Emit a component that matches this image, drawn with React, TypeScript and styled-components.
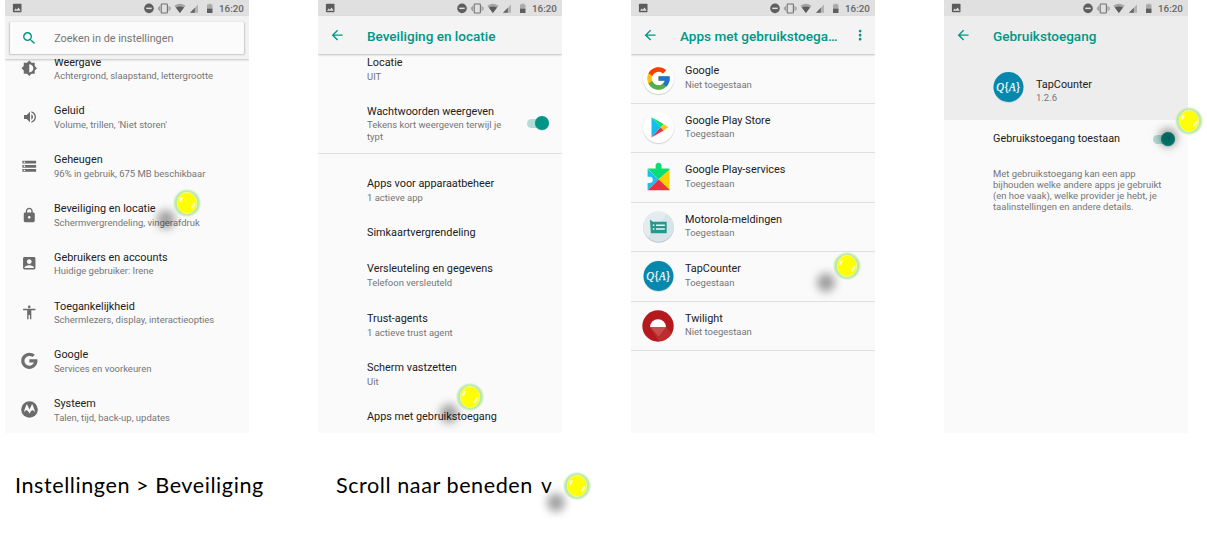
import React from "react";
import styled, { createGlobalStyle } from "styled-components";
import {
  MdSearch,
  MdArrowBack,
  MdMoreVert,
  MdBrightness6,
  MdVolumeUp,
  MdStorage,
  MdLock,
  MdAccountBox,
  MdAccessibility,
} from "react-icons/md";
import { FcGoogle } from "react-icons/fc";

const TEAL = "#009688";

const GlobalStyle = createGlobalStyle`
  body { margin: 0; background: #fff; overflow: hidden; }
  * { box-sizing: border-box; }
`;

const Page = styled.main`
  position: relative;
  width: 1207px;
  height: 537px;
  overflow: hidden;
  font-family: Roboto, "Liberation Sans", sans-serif;
`;

const Phones = styled.div`
  display: flex;
  gap: 69px;
  padding-left: 5px;
`;

const Phone = styled.section`
  display: flex;
  flex-direction: column;
  width: 244px;
  height: 433px;
  background: #fafafa;
  overflow: hidden;
`;

const StatusBar = styled.div`
  flex: none;
  display: flex;
  align-items: center;
  justify-content: space-between;
  height: 16px;
  padding: 0 5px 0 7px;
  background: #e0e0e0;
  color: #646464;
`;

const StatusRight = styled.div`
  display: flex;
  align-items: center;
`;

const Clock = styled.span`
  width: 25px;
  padding-top: 1px;
  font-size: 9.8px;
  line-height: 15px;
  font-weight: 500;
  color: #666;
  white-space: nowrap;
`;

const SearchHeader = styled.div`
  flex: none;
  position: relative;
  z-index: 1;
  height: 43px;
  padding: 6px 5px;
  background: #f2f2f2;
  box-shadow: 0 1px 2px rgba(0, 0, 0, 0.22);
`;

const SearchBox = styled.div`
  display: flex;
  align-items: center;
  height: 32px;
  padding-left: 11px;
  border-radius: 1px;
  background: #fbfbfb;
  box-shadow: 0 0.5px 1.5px 0.5px rgba(0, 0, 0, 0.18);
  color: #757575;
  font-size: 10.85px;
  svg { color: ${TEAL}; margin-right: 16.7px; }
`;

const Header = styled.header<{ $flat?: boolean }>`
  flex: none;
  position: relative;
  z-index: 1;
  display: flex;
  align-items: center;
  height: 38px;
  padding: 1px 7px 0 11px;
  color: ${TEAL};
  background: ${(p) => (p.$flat ? "#ededed" : "#f4f4f4")};
  box-shadow: ${(p) => (p.$flat ? "none" : "0 1px 2px rgba(0,0,0,0.24)")};
`;

const HeaderTitle = styled.h1`
  flex: 1;
  margin: 0 0 0 21.7px;
  font-size: 13.55px;
  line-height: 20px;
  font-weight: 500;
  white-space: nowrap;
`;

const List = styled.div<{ $lift?: number }>`
  margin-top: ${(p) => -(p.$lift ?? 0)}px;
`;

const Row = styled.div<{ $h: number; $line?: boolean; $drop?: number }>`
  display: flex;
  align-items: center;
  height: ${(p) => p.$h}px;
  padding-top: ${(p) => p.$drop ?? 0}px;
  border-bottom: ${(p) => (p.$line ? "1px solid #e0e0e0" : "none")};
`;

const IconCell = styled.div<{ $w?: number }>`
  flex: none;
  display: flex;
  align-items: center;
  justify-content: center;
  width: ${(p) => p.$w ?? 49}px;
  color: #6b6b6b;
`;

const Texts = styled.div<{ $w?: number; $rise?: number }>`
  width: ${(p) => (p.$w ? `${p.$w}px` : "auto")};
  padding-bottom: ${(p) => p.$rise ?? 0}px;
`;

const Title = styled.div`
  font-size: 10.85px;
  line-height: 14.6px;
  color: #212121;
  white-space: nowrap;
`;

const Sub = styled.div`
  font-size: 9.47px;
  line-height: 11.1px;
  color: #757575;
`;

const Gap = styled.div`
  height: 12px;
`;

const Switch = styled.div`
  display: flex;
  align-items: center;
  width: 22px;
  height: 14px;
  margin-left: auto;
  margin-right: 13px;
  &::before {
    content: "";
    flex: none;
    width: 20px;
    height: 9px;
    border-radius: 5px;
    background: #b3dcd7;
  }
  &::after {
    content: "";
    flex: none;
    width: 14px;
    height: 14px;
    margin-left: -12px;
    border-radius: 50%;
    background: ${TEAL};
    box-shadow: 0 0.5px 1px rgba(0, 0, 0, 0.2);
  }
`;

const Disc = styled.div<{ $bg: string }>`
  display: flex;
  align-items: center;
  justify-content: center;
  width: 31px;
  height: 31px;
  border-radius: 50%;
  background: ${(p) => p.$bg};
  box-shadow: 0 0.7px 1.2px rgba(0, 0, 0, 0.22);
`;

const AppHead = styled.div`
  display: flex;
  align-items: center;
  height: 66px;
  padding: 0 0 1px 49px;
  background: #ededed;
`;

const AppTexts = styled.div`
  margin: 8px 0 0 12px;
`;

const Explanation = styled.p`
  margin: 11px 10px 0 49px;
  font-size: 9.47px;
  line-height: 11.1px;
  color: #757575;
  white-space: nowrap;
`;

const Captions = styled.div`
  display: flex;
  padding: 37px 0 0 15px;
  font-family: Lato, "Open Sans", sans-serif;
  font-size: 21.6px;
  line-height: 30px;
  color: #000;
  white-space: pre;
`;

const Caption = styled.div<{ $w: number; $ls: number }>`
  width: ${(p) => p.$w}px;
  letter-spacing: ${(p) => p.$ls}px;
`;

const Chevron = styled.span`
  margin-left: 2px;
  font-size: 21px;
`;

/* Glossy marker lying over the screens, with its cast shade down-left. */
const Marker = styled.div<{ $x: number; $y: number }>`
  position: absolute;
  left: ${(p) => p.$x}px;
  top: ${(p) => p.$y}px;
  width: 0;
  height: 0;
`;

const Shade = styled.div`
  position: absolute;
  left: -30px;
  top: 7px;
  width: 18px;
  height: 19px;
  border-radius: 50%;
  background: rgba(0, 0, 0, 0.36);
  filter: blur(4.5px);
`;

const Orb = styled.svg`
  position: absolute;
  left: -15px;
  top: -15px;
`;

function PhoneStatus() {
  return (
    <StatusBar>
      <svg width="10" height="10" viewBox="0 0 10 10">
        <path d="M1.7.8h7q.8 0 .8.8v6.8q0 .8-.8.8h-7q-.8 0-.8-.8V1.6q0-.8.8-.8z" fill="#5b5b5b" />
        <path d="M2 7.7l1.7-2.3 1.2 1.4 1.6-2.2 2.2 3.1z" fill="#e0e0e0" />
      </svg>
      <StatusRight>
        <svg width="76" height="16" viewBox="0 0 76 16">
          <circle cx="6" cy="8.4" r="4.8" fill="#5e5e5e" />
          <rect x="3.3" y="7.6" width="5.4" height="1.5" fill="#e0e0e0" />
          <rect x="18.2" y="4" width="6.2" height="9" rx=".8" fill="none" stroke="#707070" strokeWidth="1.1" />
          <path d="M16.6 6v5M15.4 7.2v2.6M26 6v5M27.2 7.2v2.6" stroke="#8a8a8a" strokeWidth=".8" />
          <path d="M31.3 5.7Q36.9 2 42.5 5.7L36.9 13z" fill="#a5a5a5" />
          <path d="M32.8 7.6Q36.9 5.3 41 7.6L36.9 13z" fill="#5b5b5b" />
          <path d="M47 12.8l8-8.3v8.3z" fill="#b2b2b2" />
          <path d="M47 12.8l4.8-5v5z" fill="#666" />
          <path d="M64 4.600h1.500v-.9h2.500v.9h1.500v4h-5.500z" fill="#aaa" />
          <rect x="64" y="8.500" width="5.500" height="4.500" fill="#5e5e5e" />
        </svg>
        <Clock>16:20</Clock>
      </StatusRight>
    </StatusBar>
  );
}

function TapCounterIcon() {
  return (
    <svg width="31" height="32" viewBox="0 0 31 32">
      <circle cx="15.5" cy="16.8" r="15" fill="#c8d0d3" />
      <circle cx="15.5" cy="16" r="15" fill="#0688ae" />
      <text x="15.5" y="20.2" textAnchor="middle" textLength="24.5" lengthAdjust="spacingAndGlyphs" fontFamily="Liberation Serif, serif" fontSize="12.5" fill="#fff" stroke="#fff" strokeWidth=".25">
        <tspan fontStyle="italic">Q</tspan>
        <tspan>{"{"}</tspan>
        <tspan fontStyle="italic">A</tspan>
        <tspan>{"}"}</tspan>
      </text>
    </svg>
  );
}

function PlayStoreIcon() {
  return (
    <svg width="31" height="31" viewBox="0 0 31 31">
      <path d="M8.5 5.2L17.6 15.2 8.5 25.4z" fill="#12bdf2" />
      <path d="M8.5 5.2l12.1 6.9-3 3.1z" fill="#00e27b" />
      <path d="M8.5 25.4l12.1-6.9-3-3.3z" fill="#e8324a" />
      <path d="M20.5 12l5 3.2-5 3.3-3-3.3z" fill="#ffc515" />
    </svg>
  );
}

function PlayServicesIcon() {
  return (
    <svg width="31" height="31" viewBox="0 0 31 31">
      <path d="M15.5 17.2L26.5 7v20.2q0 1-1 1z" fill="#ffd000" />
      <path d="M15.5 17.2L4.6 28.3h20.9q1 0 1-.6z" fill="#ee2f42" />
      <path d="M4.6 6.8l10.9 10.4L4.6 28.3V21a3.2 3.2 0 1 0 0-6.2z" fill="#17c1ee" />
      <path d="M4.6 6.6h8.1V5a3.1 3.1 0 1 1 5.8 0v1.6h7q1 0 1 .8l-11 9.8z" fill="#09dd73" />
      <circle cx="6.8" cy="17.8" r="3" fill="#fafafa" />
    </svg>
  );
}

function MessageIcon() {
  return (
    <svg width="31" height="32" viewBox="0 0 31 32">
      <circle cx="15.5" cy="16.5" r="15.3" fill="#bcc6cb" />
      <circle cx="15.5" cy="15.6" r="15.2" fill="#d9e4ea" />
      <path d="M4.7 26.3A15.2 15.2 0 0 1 24 3z" fill="#e4ecf0" />
      <path d="M6.9 8.500l3 2.300h13.800v11.500H7.800z" fill="#26998e" />
      <path d="M9.800 14.200h1.600M9.800 17.900h1.600M13 14.200h8.800M13 17.900h8.800" stroke="#e7f8f5" strokeWidth="1.500" />
    </svg>
  );
}

function TwilightIcon() {
  return (
    <svg width="32" height="32" viewBox="0 0 32 32">
      <circle cx="16" cy="16" r="15.7" fill="#b3191d" />
      <path d="M8 17h16.200l5.500 6.500Q25 31 16.700 31z" fill="#bd2c2f" />
      <path d="M8 17h16.200l-7.500 9.300z" fill="#cb4c4e" />
      <path d="M8 17a8 7.8 0 0 1 16 0z" fill="#fff" />
    </svg>
  );
}

function GoogleMono() {
  return (
    <svg width="19.500" height="19.500" viewBox="0 0 48 48" fill="#6f6f6f">
      <path d="M42.600 20H23v8h11.300c-1.600 4.700-6.100 8-11.300 8-6.600 0-12-5.400-12-12s5.400-12 12-12c3.100 0 5.800 1.200 8 3l5.600-5.600C33 6 28.300 4 23 4 12 4 3 13 3 24s9 20 20 20 20-9 20-20c0-1.300-.1-2.700-.4-4z" />
    </svg>
  );
}

function MotorolaMono() {
  return (
    <svg width="17" height="17" viewBox="0 0 17 17">
      <circle cx="8.500" cy="8.500" r="8.300" fill="#6b6b6b" />
      <path d="M2.700 12.500C3.500 8 5 4.500 5.900 3L8.500 8.400 11.100 3c.9 1.500 2.400 5 3.200 9.500-.7-2.200-1.700-3.200-2.700-3.200-1.400 0-2 1.300-3.100 3.200-1.100-1.900-1.700-3.200-3.100-3.200-1 0-2 1-2.700 3.200z" fill="#fafafa" />
    </svg>
  );
}

const settings = [
  { icon: <MdBrightness6 size={16.5} />, title: "Weergave", sub: "Achtergrond, slaapstand, lettergrootte" },
  { icon: <MdVolumeUp size={16} />, title: "Geluid", sub: "Volume, trillen, 'Niet storen'" },
  { icon: <MdStorage size={16.5} />, title: "Geheugen", sub: "96% in gebruik, 675 MB beschikbaar" },
  { icon: <MdLock size={16.5} />, title: "Beveiliging en locatie", sub: "Schermvergrendeling, vingerafdruk" },
  { icon: <MdAccountBox size={16.5} />, title: "Gebruikers en accounts", sub: "Huidige gebruiker: Irene" },
  { icon: <MdAccessibility size={16.5} />, title: "Toegankelijkheid", sub: "Schermlezers, display, interactieopties" },
  { icon: <GoogleMono />, title: "Google", sub: "Services en voorkeuren" },
  { icon: <MotorolaMono />, title: "Systeem", sub: "Talen, tijd, back-up, updates" },
];

const security = [
  { h: 49.5, title: "Apps voor apparaatbeheer", sub: "1 actieve app" },
  { h: 35.5, drop: 1.5, title: "Simkaartvergrendeling" },
  { h: 49.5, title: "Versleuteling en gegevens", sub: "Telefoon versleuteld" },
  { h: 49.5, title: "Trust-agents", sub: "1 actieve trust agent" },
  { h: 49.5, title: "Scherm vastzetten", sub: "Uit" },
  { h: 35.5, drop: 1.5, title: "Apps met gebruikstoegang" },
];

const apps = [
  { icon: <Disc $bg="#fff"><FcGoogle size={27} /></Disc>, title: "Google", sub: "Niet toegestaan" },
  { icon: <Disc $bg="#fff"><PlayStoreIcon /></Disc>, title: "Google Play Store", sub: "Toegestaan" },
  { icon: <PlayServicesIcon />, title: "Google Play-services", sub: "Toegestaan" },
  { icon: <MessageIcon />, title: "Motorola-meldingen", sub: "Toegestaan" },
  { icon: <TapCounterIcon />, title: "TapCounter", sub: "Toegestaan" },
  { icon: <TwilightIcon />, title: "Twilight", sub: "Niet toegestaan" },
];

const markers = [
  [187, 203],
  [470, 397],
  [847, 266],
  [1188.5, 120.5],
  [577, 485.5],
];

export default function App() {
  return (
    <Page>
      <GlobalStyle />
      <Phones>
        <Phone>
          <PhoneStatus />
          <SearchHeader>
            <SearchBox>
              <MdSearch size={16.5} />
              Zoeken in de instellingen
            </SearchBox>
          </SearchHeader>
          <List $lift={15}>
            {settings.map((s) => (
              <Row key={s.title} $h={48.8}>
                <IconCell>{s.icon}</IconCell>
                <Texts>
                  <Title>{s.title}</Title>
                  <Sub>{s.sub}</Sub>
                </Texts>
              </Row>
            ))}
          </List>
        </Phone>

        <Phone>
          <PhoneStatus />
          <Header>
            <MdArrowBack size={16.3} />
            <HeaderTitle>Beveiliging en locatie</HeaderTitle>
          </Header>
          <List $lift={10}>
            <Row $h={50}>
              <IconCell />
              <Texts>
                <Title>Locatie</Title>
                <Sub>UIT</Sub>
              </Texts>
            </Row>
            <Row $h={59.5} $line>
              <IconCell />
              <Texts $w={142}>
                <Title>Wachtwoorden weergeven</Title>
                <Sub>Tekens kort weergeven terwijl je typt</Sub>
              </Texts>
              <Switch />
            </Row>
            <Gap />
            {security.map((s) => (
              <Row key={s.title} $h={s.h} $drop={s.drop}>
                <IconCell />
                <Texts>
                  <Title>{s.title}</Title>
                  {s.sub && <Sub>{s.sub}</Sub>}
                </Texts>
              </Row>
            ))}
          </List>
        </Phone>

        <Phone>
          <PhoneStatus />
          <Header>
            <MdArrowBack size={16.3} />
            <HeaderTitle>Apps met gebruikstoega…</HeaderTitle>
            <MdMoreVert size={16.3} />
          </Header>
          <List>
            {apps.map((a) => (
              <Row key={a.title} $h={49.5} $line>
                <IconCell $w={54}>{a.icon}</IconCell>
                <Texts $rise={2.4}>
                  <Title>{a.title}</Title>
                  <Sub>{a.sub}</Sub>
                </Texts>
              </Row>
            ))}
          </List>
        </Phone>

        <Phone>
          <PhoneStatus />
          <Header $flat>
            <MdArrowBack size={16.3} />
            <HeaderTitle>Gebruikstoegang</HeaderTitle>
          </Header>
          <AppHead>
            <TapCounterIcon />
            <AppTexts>
              <Title>TapCounter</Title>
              <Sub>1.2.6</Sub>
            </AppTexts>
          </AppHead>
          <Row $h={37} $drop={1}>
            <IconCell />
            <Title>Gebruikstoegang toestaan</Title>
            <Switch />
          </Row>
          <Explanation>
            Met gebruikstoegang kan een app
            <br />
            bijhouden welke andere apps je gebruikt
            <br />
            (en hoe vaak), welke provider je hebt, je
            <br />
            taalinstellingen en andere details.
          </Explanation>
        </Phone>
      </Phones>

      <Captions>
        <Caption $w={321} $ls={0.56}>{"Instellingen > Beveiliging"}</Caption>
        <Caption $w={240} $ls={0.56}>
          Scroll naar beneden <Chevron>v</Chevron>
        </Caption>
      </Captions>

      {markers.map(([x, y]) => (
        <Marker key={x} $x={x} $y={y}>
          <Shade />
          <Orb width="30" height="30" viewBox="-15 -15 30 30">
            <defs>
              <radialGradient id={`halo${Math.round(x)}`}>
                <stop offset="0.7" stopColor="#b4e69a" />
                <stop offset="0.84" stopColor="#b9e8a2" stopOpacity="0.85" />
                <stop offset="1" stopColor="#c8efb6" stopOpacity="0" />
              </radialGradient>
            </defs>
            <circle r="14.500" fill={`url(#halo${Math.round(x)})`} />
            <ellipse rx="9.800" ry="10.700" fill="#ffff00" stroke="#fbffc9" strokeWidth=".6" />
            <ellipse cx="-6.200" cy="-3.500" rx="1.300" ry="2.900" transform="rotate(28 -6.200 -3.500)" fill="#fffff0" opacity=".9" />
            <ellipse cx="6" cy="3" rx="1.200" ry="3.600" transform="rotate(30 6 3)" fill="#fffff0" opacity=".8" />
          </Orb>
        </Marker>
      ))}
    </Page>
  );
}
